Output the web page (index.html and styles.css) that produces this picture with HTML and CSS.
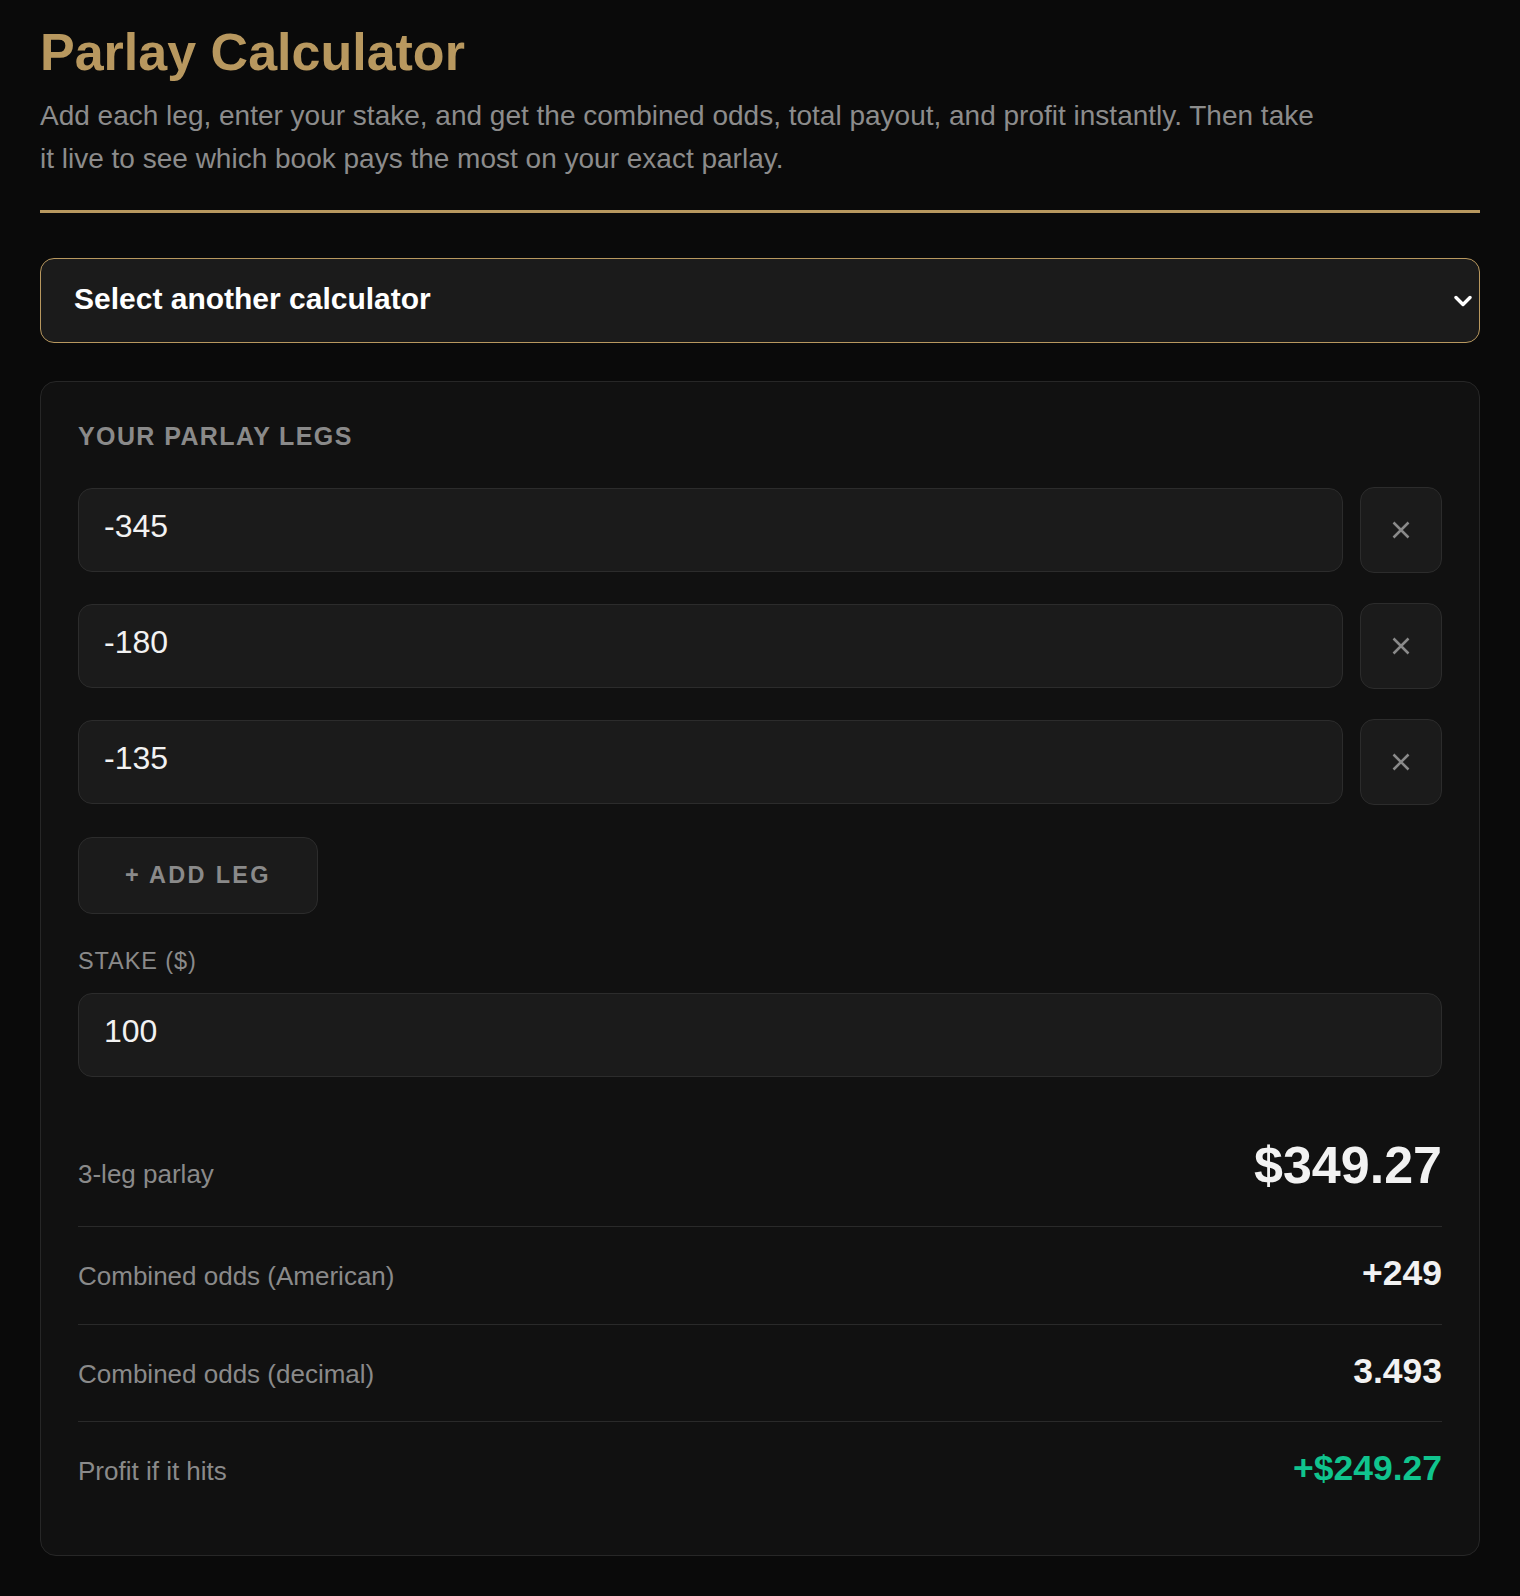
FILE: index.html
```html
<!DOCTYPE html>
<html lang="en">
<head>
<meta charset="utf-8">
<title>Parlay Calculator</title>
<link rel="stylesheet" href="styles.css">
</head>
<body>
<div class="page">
  <header class="hero">
    <h1 class="title">Parlay Calculator</h1>
    <p class="subtitle">Add each leg, enter your stake, and get the combined odds, total payout, and profit instantly. Then take it live to see which book pays the most on your exact parlay.</p>
  </header>

  <div class="picker">
    <select class="picker-select" aria-label="Select another calculator">
      <option>Select another calculator</option>
    </select>
    <svg class="picker-chevron" viewBox="0 0 18 12" aria-hidden="true"><polyline points="2,2.5 9,9.5 16,2.5" fill="none" stroke="#ffffff" stroke-width="3.4" stroke-linecap="round" stroke-linejoin="round"/></svg>
  </div>

  <section class="card">
    <h2 class="section-label">Your parlay legs</h2>
    <div class="legs">
      <div class="leg">
        <input class="field" type="text" value="-345">
        <button class="remove" type="button" aria-label="Remove leg"><svg viewBox="0 0 18 18" class="remove-icon"><path d="M1.5 1.5 L16.5 16.5 M16.5 1.5 L1.5 16.5" stroke="#8a8a8a" stroke-width="2.5"/></svg></button>
      </div>
      <div class="leg">
        <input class="field" type="text" value="-180">
        <button class="remove" type="button" aria-label="Remove leg"><svg viewBox="0 0 18 18" class="remove-icon"><path d="M1.5 1.5 L16.5 16.5 M16.5 1.5 L1.5 16.5" stroke="#8a8a8a" stroke-width="2.5"/></svg></button>
      </div>
      <div class="leg">
        <input class="field" type="text" value="-135">
        <button class="remove" type="button" aria-label="Remove leg"><svg viewBox="0 0 18 18" class="remove-icon"><path d="M1.5 1.5 L16.5 16.5 M16.5 1.5 L1.5 16.5" stroke="#8a8a8a" stroke-width="2.5"/></svg></button>
      </div>
    </div>
    <button class="add-leg" type="button">+ Add leg</button>

    <label class="field-label" for="stake">Stake ($)</label>
    <input class="field field--block" id="stake" type="text" value="100">

    <div class="results">
      <div class="result-row result-row--main">
        <span class="result-label">3-leg parlay</span>
        <span class="result-value result-value--big">$349.27</span>
      </div>
      <div class="result-row">
        <span class="result-label">Combined odds (American)</span>
        <span class="result-value">+249</span>
      </div>
      <div class="result-row">
        <span class="result-label">Combined odds (decimal)</span>
        <span class="result-value">3.493</span>
      </div>
      <div class="result-row">
        <span class="result-label">Profit if it hits</span>
        <span class="result-value result-value--profit">+$249.27</span>
      </div>
    </div>
  </section>
</div>
</body>
</html>
```

FILE: styles.css
```css
* {
  box-sizing: border-box;
}

body {
  margin: 0;
  background: #0a0a0a;
  font-family: "Liberation Sans", Arial, sans-serif;
  color: #f2f2f2;
}

.page {
  padding: 21px 40px 40px;
}

.hero {
  border-bottom: 3px solid #b8985f;
  padding-bottom: 30px;
}

.title {
  margin: 0;
  font-size: 52px;
  line-height: 1.2;
  font-weight: 700;
  color: #b8985f;
}

.subtitle {
  margin: 12px 0 0;
  font-size: 28px;
  line-height: 42.5px;
  color: #8c8c8c;
  max-width: 1282px;
}

.picker {
  position: relative;
  margin-top: 45px;
}

.picker-select {
  display: block;
  width: 100%;
  height: 85px;
  appearance: none;
  -webkit-appearance: none;
  background: #1b1b1b;
  border: 1px solid #b8985f;
  border-radius: 14px;
  color: #ffffff;
  font-family: "Liberation Sans", Arial, sans-serif;
  font-size: 30px;
  font-weight: 700;
  padding: 0 32px 4px 33px;
  outline: none;
}

.picker-chevron {
  position: absolute;
  right: 8px;
  top: 50%;
  width: 18px;
  height: 12px;
  transform: translateY(-50%);
  pointer-events: none;
}

.card {
  margin-top: 38px;
  background: #111111;
  border: 1px solid #272727;
  border-radius: 16px;
  padding: 40px 37px 36px;
}

.section-label {
  margin: 0 0 36px;
  font-size: 25px;
  font-weight: 700;
  letter-spacing: 1.4px;
  text-transform: uppercase;
  color: #8a8a8a;
  line-height: normal;
}

.legs {
  display: flex;
  flex-direction: column;
  gap: 30px;
}

.leg {
  display: flex;
  align-items: center;
  gap: 17px;
}

.field {
  flex: 1;
  min-width: 0;
  height: 84px;
  background: #1b1b1b;
  border: 1px solid #2c2c2c;
  border-radius: 14px;
  color: #f2f2f2;
  font-family: "Liberation Sans", Arial, sans-serif;
  font-size: 32px;
  padding: 0 25px 7px;
  outline: none;
}

.field--block {
  display: block;
  width: 100%;
  margin-top: 18px;
}

.remove {
  flex: none;
  width: 82px;
  height: 86px;
  padding: 0;
  background: #1b1b1b;
  border: 1px solid #2c2c2c;
  border-radius: 14px;
  display: grid;
  place-items: center;
}

.remove-icon {
  width: 18px;
  height: 18px;
}

.add-leg {
  display: block;
  margin-top: 32px;
  width: 240px;
  height: 77px;
  padding: 0;
  background: #1b1b1b;
  border: 1px solid #2c2c2c;
  border-radius: 14px;
  color: #8a8a8a;
  font-family: "Liberation Sans", Arial, sans-serif;
  font-size: 23.5px;
  font-weight: 700;
  letter-spacing: 2.3px;
  text-transform: uppercase;
}

.field-label {
  display: block;
  margin-top: 34px;
  font-size: 23.5px;
  letter-spacing: 0.9px;
  text-transform: uppercase;
  color: #8a8a8a;
  line-height: normal;
}

.results {
  margin-top: 32px;
}

.result-row {
  display: flex;
  justify-content: space-between;
  align-items: baseline;
  padding: 26px 0 26px;
  border-top: 1px solid #2a2a2a;
}

.result-row--main {
  border-top: none;
  padding-bottom: 30px;
}

.result-label {
  font-size: 26px;
  line-height: 1.6;
  color: #8a8a8a;
}

.result-value {
  font-size: 35.5px;
  font-weight: 700;
  color: #f2f2f2;
  line-height: normal;
}

.result-value--big {
  font-size: 52px;
}

.result-value--profit {
  color: #10c48e;
}
```
